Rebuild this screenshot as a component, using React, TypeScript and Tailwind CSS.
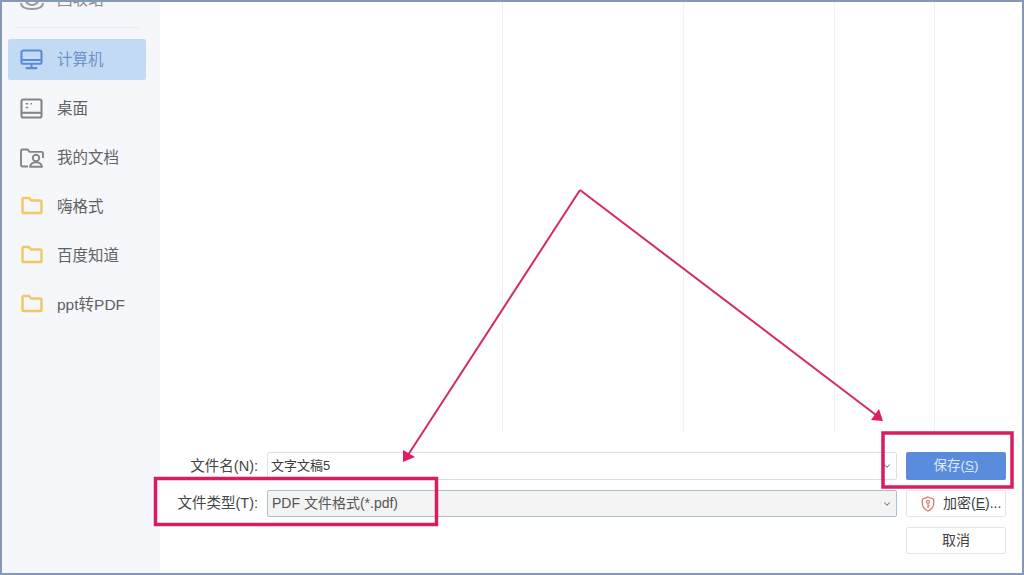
import { ChevronDown } from "lucide-react";
import type { ReactNode } from "react";

const font = "font-['Liberation_Sans','Noto_Sans_CJK_SC',sans-serif]";

function Folder() {
  return (
    <svg width="24" height="19" viewBox="0 0 24 20" fill="none" stroke="#f2c766" strokeWidth="2.600" strokeLinejoin="round" className="-mt-[3px]">
      <path d="M2 3.500a1.500 1.500 0 0 1 1.500-1.500h5.200l2.400 2.800h9.400a1.500 1.500 0 0 1 1.500 1.500v10.200a1.500 1.500 0 0 1-1.500 1.500h-17A1.500 1.500 0 0 1 2 16.500z" />
    </svg>
  );
}

function Computer() {
  return (
    <svg width="23" height="21" viewBox="0 0 24 22" fill="none" stroke="#5b8ad6" strokeWidth="2.200">
      <rect x="1.500" y="1.500" width="21" height="14" rx="2" />
      <path d="M1.500 11.500h21M12 15.500v4M6 20h12" />
    </svg>
  );
}

function Desktop() {
  return (
    <svg width="23" height="21" viewBox="0 0 24 22" fill="none" stroke="#858585" strokeWidth="2.200">
      <rect x="1.500" y="1.500" width="21" height="19" rx="2" />
      <path d="M2 15.500h20" />
      <path d="M6 6h2.500M11 6h1.500M6 10h2.500" strokeWidth="1.600" />
    </svg>
  );
}

function Docs() {
  return (
    <svg width="24" height="20" viewBox="0 0 24 20" fill="none" stroke="#858585" strokeWidth="1.900" strokeLinejoin="round">
      <path d="M8 18.500H2.500A1.500 1.500 0 0 1 1 17V3a1.500 1.500 0 0 1 1.500-1.500h5l2.200 2.400H21.500A1.500 1.500 0 0 1 23 5.400V10" />
      <circle cx="16" cy="10" r="3.200" />
      <path d="M10 18.800c.4-3 2.600-4.400 6-4.400s5.600 1.400 6 4.400z" />
    </svg>
  );
}

function Shield() {
  return (
    <svg width="14" height="16" viewBox="0 0 16 18" fill="none" stroke="#d9776f" strokeWidth="1.400" className="shrink-0">
      <path d="M8 1l6.500 2.500v5c0 4-3 6.800-6.500 8.500-3.500-1.700-6.500-4.500-6.500-8.500v-5z" />
      <circle cx="8" cy="6.400" r="1.700" />
      <path d="M8 8v5.500M8 11h2" />
    </svg>
  );
}

function NavItem({ icon, label, active }: { icon: ReactNode; label: string; active?: boolean }) {
  return (
    <div className={`flex h-[41px] items-center rounded-[2px] pl-[12px] text-[15.500px] ${active ? "bg-[#c3daf4] text-[#6b93cc]" : "text-[#626262]"}`}>
      <span className="flex w-[37px] items-center">{icon}</span>
      <span>{label}</span>
    </div>
  );
}

function Button({ children, className }: { children: ReactNode; className: string }) {
  return (
    <div className={`flex w-[100px] items-center rounded-[2px] ${className}`}>{children}</div>
  );
}

export default function App() {
  return (
    <div className={`${font} flex h-[575px] w-[1024px] overflow-hidden border-2 border-[#8499b8] bg-white`}>
      <aside className="flex w-[158px] shrink-0 flex-col gap-2 overflow-hidden bg-[#f5f7fb] pl-[6px] pr-[12px]">
        <div className="-mt-[23px] flex h-[41px] shrink-0 items-center pl-[12px] text-[15.500px] text-[#8a8a8a]">
          <svg width="24" height="22" viewBox="0 0 24 22" fill="none" stroke="#9a9a9a" strokeWidth="2" className="mr-[13px]">
            <circle cx="12" cy="9" r="7" />
            <path d="M1 14c0 4 4 6 11 6s11-2 11-6" />
          </svg>
          <span>回收站</span>
        </div>
        <div className="mx-[9px] -mt-[1px] h-px shrink-0 bg-[#e8eaef]" />
        <div className="mr-[2px] mt-[3px] flex flex-col gap-2">
          <NavItem active icon={<Computer />} label="计算机" />
          <NavItem icon={<Desktop />} label="桌面" />
          <NavItem icon={<Docs />} label="我的文档" />
          <NavItem icon={<Folder />} label="嗨格式" />
          <NavItem icon={<Folder />} label="百度知道" />
          <NavItem icon={<Folder />} label="ppt转PDF" />
        </div>
      </aside>

      <main className="relative flex min-w-0 flex-1 flex-col">
        <div className="flex h-[430px] shrink-0">
          <div className="w-[343px] border-r border-[#f0f1f3]" />
          <div className="w-[181px] border-r border-[#f0f1f3]" />
          <div className="w-[151px] border-r border-[#f0f1f3]" />
          <div className="w-[100px] border-r border-[#f0f1f3]" />
        </div>

        <div className="mt-[20px] flex flex-col gap-[10px] text-[14.500px] text-[#454545]">
          <div className="flex h-[28px] items-center">
            <span className="w-[107px] pr-[9px] pt-[1px] text-right">文件名(N):</span>
            <div className="flex h-full w-[630px] items-center justify-between rounded-[2px] border border-[#dcdfe3] pl-[3px] pr-[4px]">
              <span className="text-[13px] text-[#3c3c3c]">文字文稿5</span>
              <ChevronDown size={10} strokeWidth={2.500} className="text-[#777777]" />
            </div>
            <Button className="ml-[9px] h-full justify-center bg-[#5b8bdc] text-[13.500px] text-[#dce8fa]">
              <span>保存(<span className="underline">S</span>)</span>
            </Button>
          </div>
          <div className="flex h-[27px] items-center">
            <span className="w-[107px] pr-[9px] pt-[1px] text-right">文件类型(T):</span>
            <div className="flex h-full w-[630px] items-center justify-between rounded-[2px] border border-[#a9bfd6] bg-[#f3f3f3] pl-[4px] pr-[4px]">
              <span className="text-[14px] text-[#555555]">PDF 文件格式(*.pdf)</span>
              <ChevronDown size={10} strokeWidth={2.500} className="text-[#777777]" />
            </div>
            <Button className="ml-[9px] h-full gap-[8px] border border-[#e3e5e8] pl-[14px] text-[14px] text-[#3f3f3f]">
              <Shield />
              <span className="whitespace-nowrap">加密(<span className="underline">E</span>)...</span>
            </Button>
          </div>
          <div className="flex h-[27px] justify-end pr-[16px]">
            <Button className="h-full justify-center border border-[#e3e5e8] text-[14px] text-[#3f3f3f]">取消</Button>
          </div>
        </div>

        {/* annotations: coordinates are relative to the dialog body */}
        <svg className="pointer-events-none absolute -left-[160px] -top-[2px]" width="1024" height="575" fill="none">
          <path d="M580 190L408 455M580 190L876 415" stroke="#d6296b" strokeWidth="2" />
          <path d="M403 462V450l12 7zM883 421l-12-1 8-11z" fill="#e01c62" />
          <rect x="155.500" y="478.500" width="281" height="46" stroke="#d81c62" strokeWidth="3.500" />
          <rect x="883" y="433" width="129" height="54" stroke="#d81c62" strokeWidth="3.500" />
        </svg>
      </main>
    </div>
  );
}
